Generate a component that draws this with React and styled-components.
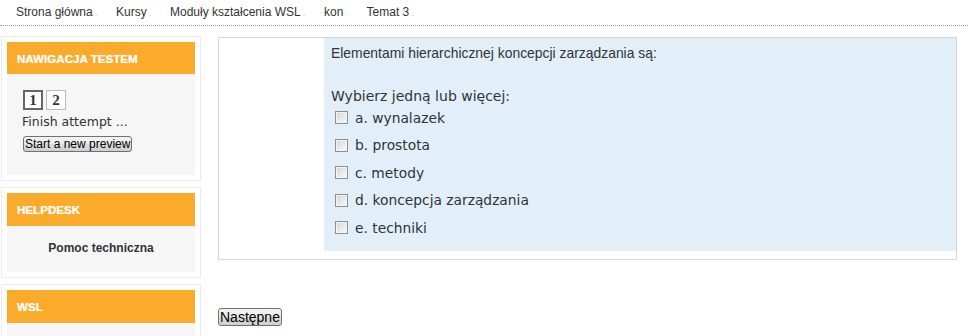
import React from "react";
import styled, { createGlobalStyle } from "styled-components";

const GlobalStyle = createGlobalStyle`
  html, body { margin: 0; padding: 0; background: #fff; }
  body { font-family: "Liberation Sans", Arial, sans-serif; color: #333; }
`;

const Breadcrumb = styled.nav`
  height: 25px;
  border-bottom: 1px dotted #9a9a9a;
  display: flex;
  align-items: center;
  padding-left: 16px;
  box-sizing: content-box;
  font-size: 12px;
  color: #333;
`;

const Crumb = styled.span`
  display: inline-flex;
  align-items: baseline;
  margin-right: 18.5px;
  position: relative;
  top: -1px;
`;

const Sep = styled.span`
  color: #d0d0d0;
  font-size: 10px;
  margin-left: 2px;
`;

const Layout = styled.div`
  display: flex;
  align-items: flex-start;
  padding: 10px 11px 0 1px;
  height: 300px;
  overflow: hidden;
`;

const Sidebar = styled.aside`
  width: 200px;
  flex: none;
  display: flex;
  flex-direction: column;
  gap: 6px;
`;

const Block = styled.section`
  border: 1px solid #ececec;
  padding: 5px;
  box-sizing: border-box;
`;

const BlockHeader = styled.div`
  height: ${(p) => p.$h || 32}px;
  background: #fbab2c;
  color: #fff;
  font-weight: bold;
  font-size: 11.6px;
  display: flex;
  align-items: center;
  padding-left: 10px;
  text-shadow: 0 0 1px rgba(255, 255, 255, 0.6);
`;

const BlockContent = styled.div`
  background: #f6f6f6;
  padding: ${(p) => p.$pad};
  min-height: ${(p) => p.$min || 0}px;
  box-sizing: border-box;
`;

const NavButtons = styled.div`
  display: flex;
  gap: 3px;
  margin-left: 1px;
`;

const QnButton = styled.span`
  width: 20px;
  height: 20px;
  box-sizing: border-box;
  background: #fff;
  border: ${(p) => (p.$current ? "2px solid #666" : "1px solid #bbb")};
  display: flex;
  align-items: center;
  justify-content: center;
  font-family: "Liberation Serif", "DejaVu Serif", serif;
  font-weight: bold;
  font-size: 15px;
  color: #333;
`;

const FinishLink = styled.div`
  font-family: "DejaVu Sans", Verdana, sans-serif;
  font-size: 12.5px;
  color: #333;
  margin-top: 3px;
  line-height: 18px;
`;

const ButtonRow = styled.div`
  display: flex;
  margin-top: ${(p) => p.$mt || 0}px;
  margin-left: ${(p) => p.$ml || 0}px;
`;

const OldButton = styled.button`
  font-family: "Liberation Sans", Arial, sans-serif;
  font-size: ${(p) => p.$fs || 13}px;
  color: #000;
  height: ${(p) => p.$h || 17}px;
  padding: 0 1px;
  line-height: 1;
  border: 1px solid #707070;
  border-radius: 3px;
  background: linear-gradient(#f4f4f4, #ececec 45%, #dcdcdc 55%, #cfcfcf);
  display: flex;
  align-items: center;
  cursor: default;
`;

const HelpText = styled.div`
  text-align: center;
  font-weight: bold;
  font-size: 12px;
  color: #333;
`;

const Main = styled.main`
  flex: 1;
  margin-left: 17px;
  padding-top: 1px;
`;

const Question = styled.div`
  border: 1px solid #d6d6d6;
  display: flex;
  height: 223px;
  box-sizing: border-box;
`;

const Info = styled.div`
  width: 105px;
  flex: none;
`;

const Content = styled.div`
  flex: 1;
  background: #e2eff9;
  margin-bottom: 8px;
  padding: 8px 7px 0;
`;

const QText = styled.div`
  font-size: 13.9px;
  line-height: 15px;
  color: #333;
`;

const Prompt = styled.div`
  font-family: "DejaVu Sans", Verdana, sans-serif;
  font-size: 14px;
  line-height: 16px;
  color: #333;
  margin-top: 27px;
`;

const Choice = styled.label`
  display: flex;
  align-items: center;
  height: 27.5px;
  padding-left: 4px;
  font-family: "DejaVu Sans", Verdana, sans-serif;
  font-size: 13.8px;
  color: #2e3338;
`;

const Box = styled.span`
  width: 13px;
  height: 13px;
  box-sizing: border-box;
  border: 1px solid #8e8f8f;
  background: linear-gradient(135deg, #d2d2d2, #f0f0f0 70%, #fafafa);
  box-shadow: inset 0 0 0 1px #f4f4f4;
  margin-right: 7px;
  flex: none;
`;

const crumbs = ["Strona główna", "Kursy", "Moduły kształcenia WSL", "kon", "Temat 3"];
const choices = ["a. wynalazek", "b. prostota", "c. metody", "d. koncepcja zarządzania", "e. techniki"];

export default function App() {
  return (
    <>
      <GlobalStyle />
      <Breadcrumb>
        {crumbs.map((c) => (
          <Crumb key={c}>
            {c}
            <Sep>.</Sep>
          </Crumb>
        ))}
      </Breadcrumb>
      <Layout>
        <Sidebar>
          <Block>
            <BlockHeader>NAWIGACJA TESTEM</BlockHeader>
            <BlockContent $pad="16px 15px 0" $min={101}>
              <NavButtons>
                <QnButton $current>1</QnButton>
                <QnButton>2</QnButton>
              </NavButtons>
              <FinishLink>Finish attempt ...</FinishLink>
              <ButtonRow $mt={5} $ml={1}>
                <OldButton $fs={12} $h={16}>Start a new preview</OldButton>
              </ButtonRow>
            </BlockContent>
          </Block>
          <Block>
            <BlockHeader $h={33}>HELPDESK</BlockHeader>
            <BlockContent $pad="15px 0 0" $min={46}>
              <HelpText>Pomoc techniczna</HelpText>
            </BlockContent>
          </Block>
          <Block>
            <BlockHeader $h={33}>WSL</BlockHeader>
            <BlockContent $pad="0" $min={20} />
          </Block>
        </Sidebar>
        <Main>
          <Question>
            <Info />
            <Content>
              <QText>Elementami hierarchicznej koncepcji zarządzania są:</QText>
              <Prompt>Wybierz jedną lub więcej:</Prompt>
              {choices.map((c) => (
                <Choice key={c}>
                  <Box />
                  {c}
                </Choice>
              ))}
            </Content>
          </Question>
          <ButtonRow $mt={48}>
            <OldButton $fs={14} $h={18}>Następne</OldButton>
          </ButtonRow>
        </Main>
      </Layout>
    </>
  );
}
